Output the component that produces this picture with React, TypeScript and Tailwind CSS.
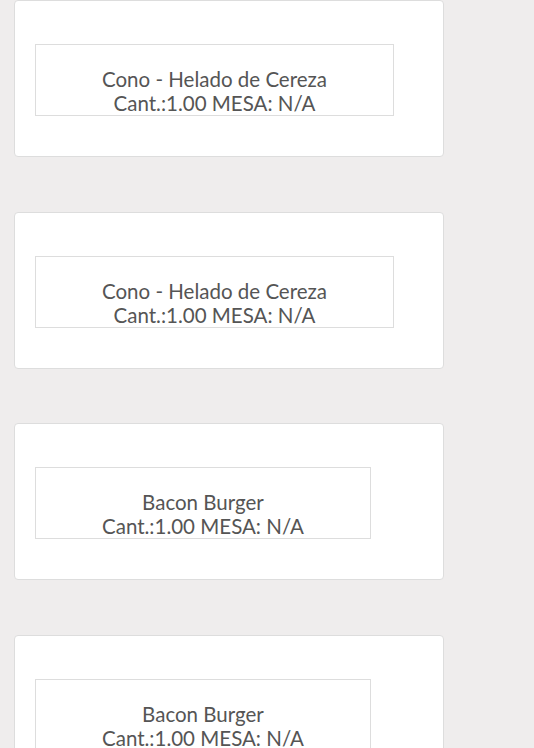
const orders = [
  { name: 'Cono - Helado de Cereza', qty: '1.00', table: 'N/A' },
  { name: 'Cono - Helado de Cereza', qty: '1.00', table: 'N/A' },
  { name: 'Bacon Burger', qty: '1.00', table: 'N/A' },
  { name: 'Bacon Burger', qty: '1.00', table: 'N/A' },
]

export default function App() {
  return (
    <div className="min-h-screen h-[748px] overflow-hidden bg-[#efeded] pl-[14px] font-['Lato','Liberation_Sans',sans-serif]">
      <div className="flex flex-col gap-[54.6px]">
        {orders.map((o, i) => (
          <div
            key={i}
            className="w-[430px] shrink-0 rounded-[4px] border border-[#dddddd] bg-white pl-[20px] pt-[43px] pb-[39px]"
          >
            <div className="inline-block border border-[#dddddd] px-[66px] pt-[22px] text-center text-[20.5px] leading-[24px] text-[#555555]">
              <div>{o.name}</div>
              <div>
                Cant.:{o.qty} MESA: {o.table}
              </div>
            </div>
          </div>
        ))}
      </div>
    </div>
  )
}
